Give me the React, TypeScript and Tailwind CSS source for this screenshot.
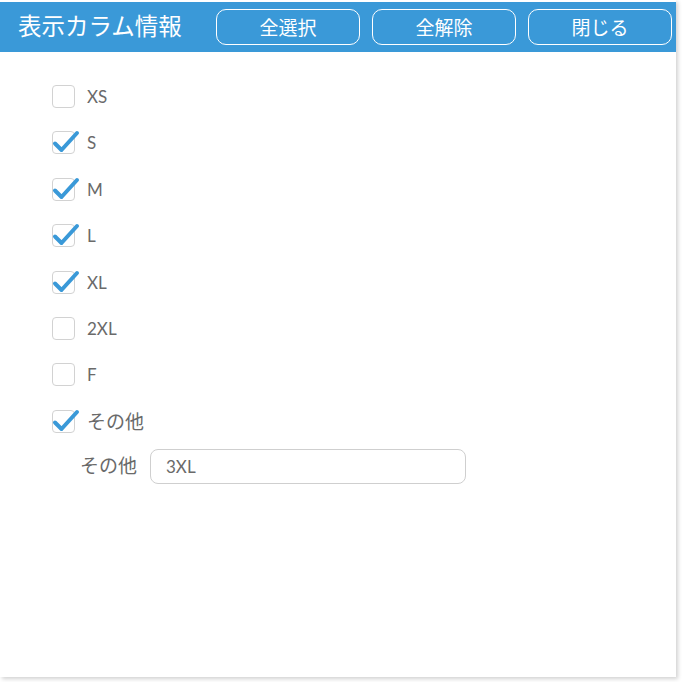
import { useState } from "react";

const SIZES = [
  { key: "XS", checked: false },
  { key: "S", checked: true },
  { key: "M", checked: true },
  { key: "L", checked: true },
  { key: "XL", checked: true },
  { key: "2XL", checked: false },
  { key: "F", checked: false },
  { key: "その他", checked: true },
];

const FONT = { fontFamily: 'Lato, "Noto Sans CJK JP", sans-serif' };

function Check({ checked }: { checked: boolean }) {
  return (
    <span className="relative block h-[23px] w-[23px] shrink-0 rounded-[4px] border border-[#d2d2d2] bg-white">
      {checked && (
        <svg
          className="absolute left-[-1px] top-[-5px] h-[28px] w-[28px]"
          viewBox="0 0 28 28"
          fill="none"
        >
          <path
            d="M3 16.5 L9.5 23 L25 6"
            stroke="#3a99d8"
            strokeWidth="4"
            strokeLinecap="round"
            strokeLinejoin="round"
          />
        </svg>
      )}
    </span>
  );
}

export default function App() {
  const [items, setItems] = useState(SIZES);
  const [other, setOther] = useState("3XL");

  const toggle = (key: string) =>
    setItems((prev) => prev.map((i) => (i.key === key ? { ...i, checked: !i.checked } : i)));

  return (
    <div className="h-[682px] w-[682px] bg-white" style={FONT}>
      <div className="h-[677px] w-[676px] bg-white pt-[2px] shadow-[2px_2px_4px_rgba(0,0,0,0.18)]">
        <div className="flex h-[50px] items-center bg-[#3a99d8] pl-[18px] pr-[4px]">
          <h1 className="w-[198px] text-[23.5px] leading-none text-white">表示カラム情報</h1>
          <div className="flex gap-[12px]">
            {["全選択", "全解除", "閉じる"].map((label) => (
              <button
                key={label}
                className="h-[36px] w-[144px] rounded-[10px] border border-white pt-[2px] text-[19px] text-white"
              >
                {label}
              </button>
            ))}
          </div>
        </div>

        <ul className="pl-[52px] pt-[33px]">
          {items.map((item) => (
            <li
              key={item.key}
              className="flex h-[46.4px] cursor-pointer items-start gap-[12px] text-[#6a6a6a]"
              onClick={() => toggle(item.key)}
            >
              <Check checked={item.checked} />
              <span className={item.key === "その他" ? "text-[19px] leading-[23px]" : "text-[17px] leading-[23px]"}>
                {item.key}
              </span>
            </li>
          ))}
        </ul>

        <div className="-mt-[7px] flex items-center pl-[80px] text-[#6a6a6a]">
          <span className="w-[70px] text-[19px]">その他</span>
          <input
            value={other}
            onChange={(e) => setOther(e.target.value)}
            className="h-[35px] w-[316px] rounded-[8px] border border-[#cfcfcf] px-[15px] text-[17px] text-[#6a6a6a] outline-none"
          />
        </div>
      </div>
    </div>
  );
}
